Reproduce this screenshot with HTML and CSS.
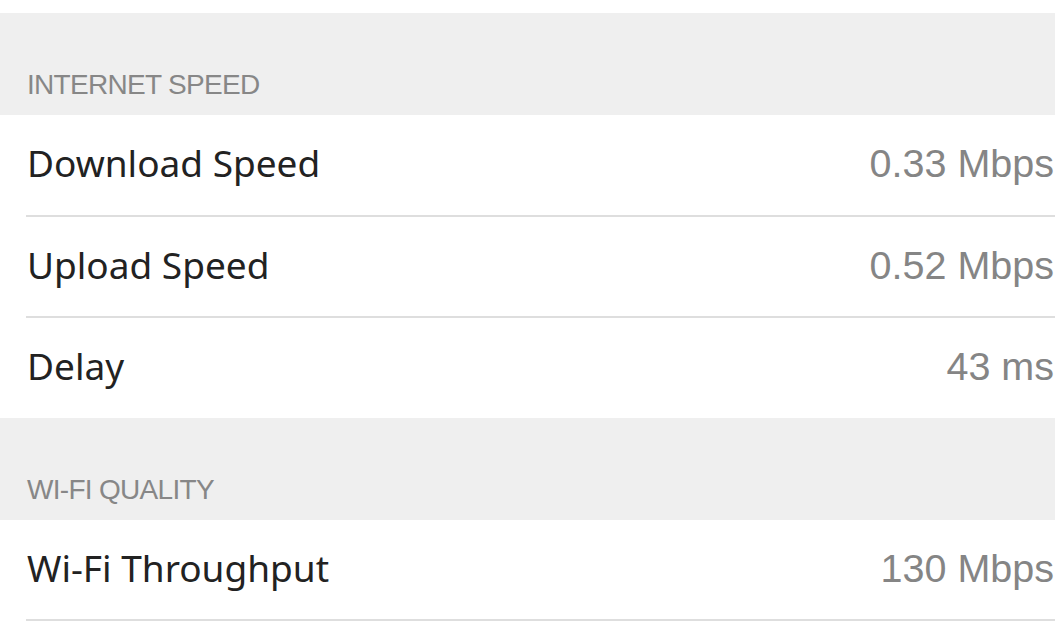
FILE: index.html
```html
<!DOCTYPE html>
<html lang="en">
<head>
<meta charset="utf-8">
<title>Speed</title>
<link rel="stylesheet" href="styles.css">
</head>
<body>
<div class="page">
  <section class="group">
    <div class="group-head"><span>INTERNET SPEED</span></div>
    <div class="row"><span class="label">Download Speed</span><span class="value">0.33 Mbps</span></div>
    <div class="row"><span class="label">Upload Speed</span><span class="value">0.52 Mbps</span></div>
    <div class="row"><span class="label">Delay</span><span class="value">43 ms</span></div>
  </section>
  <section class="group">
    <div class="group-head"><span>WI-FI QUALITY</span></div>
    <div class="row"><span class="label">Wi-Fi Throughput</span><span class="value">130 Mbps</span></div>
  </section>
</div>
</body>
</html>
```

FILE: styles.css
```css
html, body {
  margin: 0;
  padding: 0;
  background: #ffffff;
}
.page {
  padding-top: 13px;
  display: flex;
  flex-direction: column;
}
.group {
  display: flex;
  flex-direction: column;
}
.group-head {
  height: 102px;
  box-sizing: border-box;
  background: #efefef;
  display: flex;
  align-items: flex-end;
  padding: 0 0 16px 27px;
  font-family: "Liberation Sans", Arial, sans-serif;
  font-size: 28px;
  letter-spacing: -0.7px;
  color: #878787;
  line-height: 28px;
}
.row {
  height: 99.5px;
  margin-left: 26px;
  border-bottom: 2px solid #dedede;
  display: flex;
  align-items: center;
  justify-content: space-between;
}
.group:first-child .row:last-child {
  border-bottom: none;
}
.label {
  font-family: "Noto Sans", sans-serif;
  font-size: 37px;
  color: #222222;
  padding-left: 1px;
  margin-bottom: 4px;
}
.value {
  font-family: "Liberation Sans", Arial, sans-serif;
  font-size: 39.5px;
  color: #858585;
  padding-right: 1px;
  margin-bottom: 2px;
}
```
